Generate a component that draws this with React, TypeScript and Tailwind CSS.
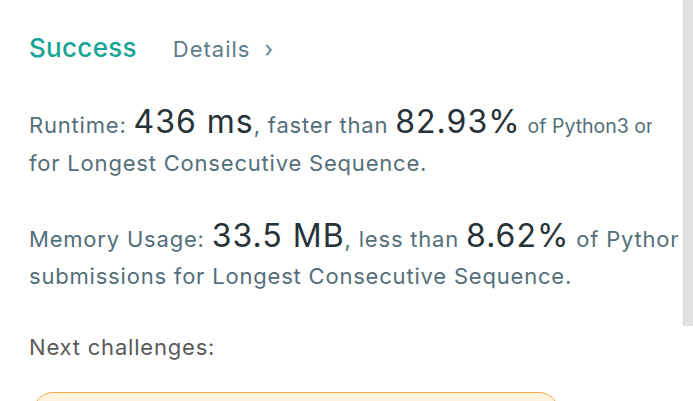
import React from "react";

const FONT = { fontFamily: "Inter, 'Noto Sans', sans-serif" };

const big = "text-[32px] tracking-[1px] text-[#263238]";

export default function App() {
	return (
		<div className="relative h-[401px] w-[693px] overflow-hidden bg-white" style={FONT}>
			<div className="w-[678px] overflow-hidden pl-[29px] pt-[28px]">
				<div className="flex items-baseline">
					<span className="text-[26px] font-medium tracking-[0.3px] text-[#17a495]">Success</span>
					<span className="ml-[36px] text-[22px] tracking-[1px] text-[#607d8b]">Details</span>
					<span className="ml-[14px] text-[22px] text-[#607d8b]">›</span>
				</div>

				<div className="mt-[36px] text-[22px] leading-[37px] tracking-[0.8px] text-[#546e7a] whitespace-nowrap">
					<div className="w-[623px] overflow-hidden">
						Runtime: <span className={big}>436 ms</span>, faster than <span className={big}>82.93%</span>{" "}
						<span className="text-[19.5px] tracking-normal">of Python3 online submissions</span>
					</div>
					<div>for Longest Consecutive Sequence.</div>
				</div>

				<div className="mt-[35px] text-[22px] leading-[37px] tracking-[0.8px] text-[#546e7a] whitespace-nowrap">
					<div>
						Memory Usage: <span className={big}>33.5 MB</span>, less than <span className={big}>8.62%</span> of
						Python3 online
					</div>
					<div>submissions for Longest Consecutive Sequence.</div>
				</div>

				<div className="mt-[36px] text-[22px] tracking-[0.8px] text-[#595959]">Next challenges:</div>

				<div className="mt-[28px] ml-[4px] h-[40px] w-[526px] rounded-[22px] border border-[#ffa940] bg-[#fff2df]" />
			</div>

			<div className="absolute right-0 top-0 h-[326px] w-[10px] border-l border-[#d6d6d6] bg-[#e2e2e2]" />
		</div>
	);
}
